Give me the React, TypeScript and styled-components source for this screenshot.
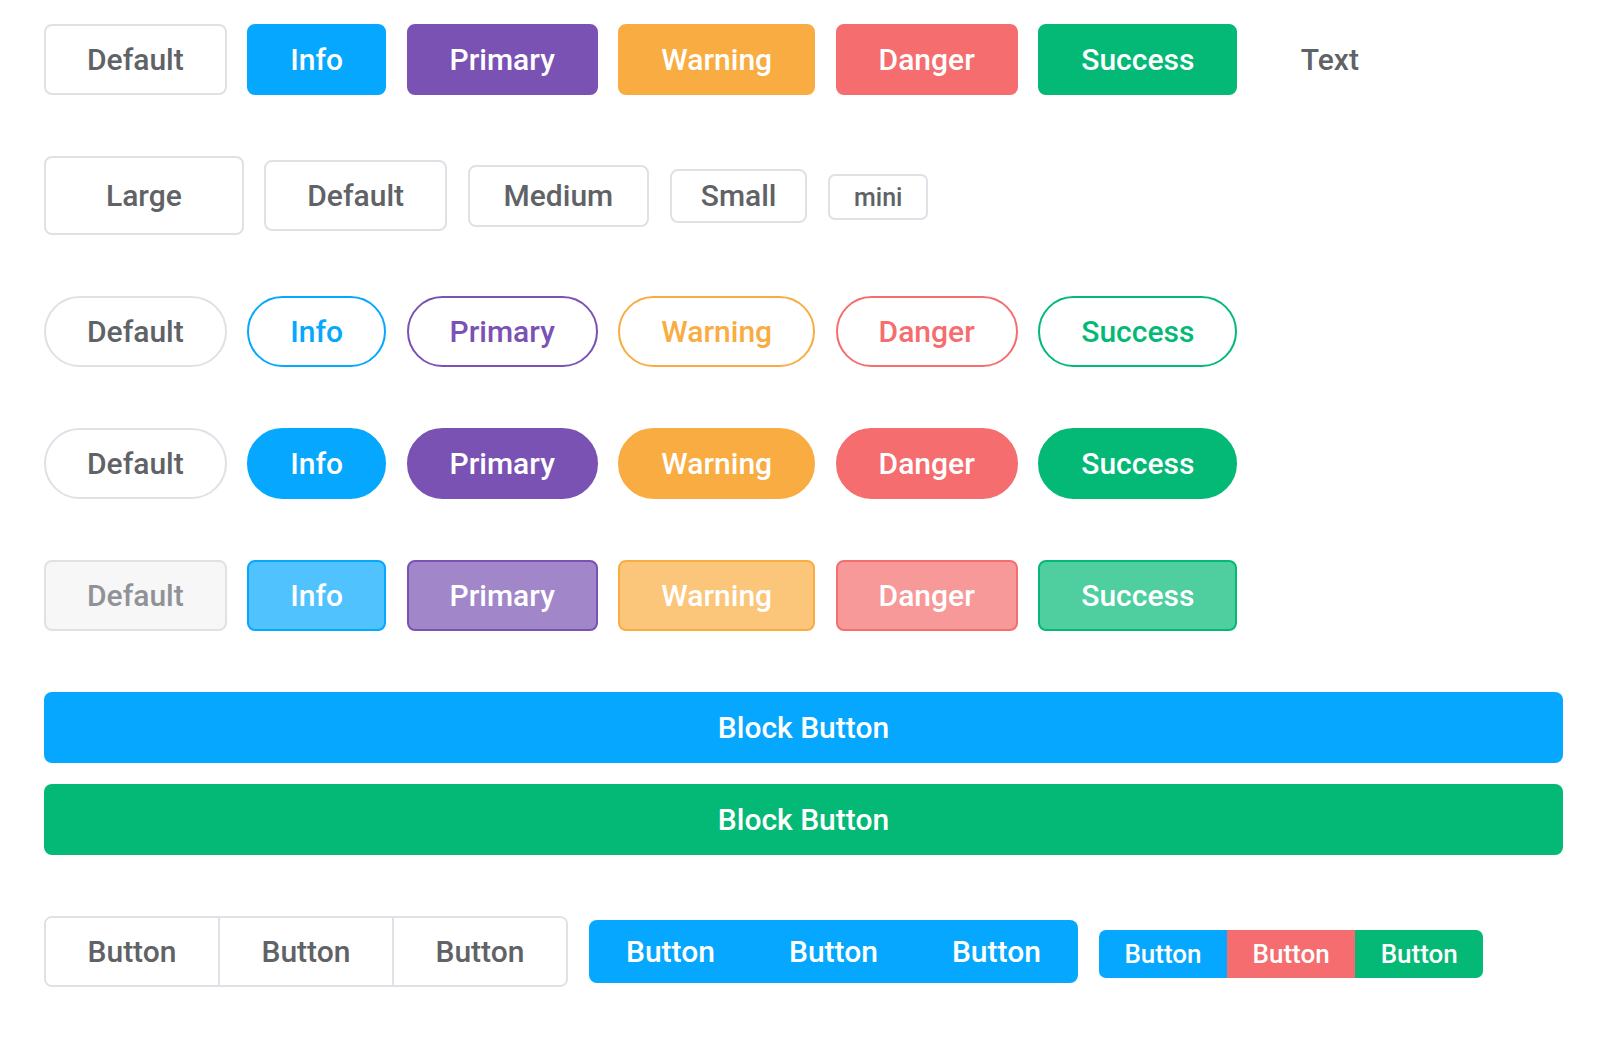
import React from "react";
import styled, { createGlobalStyle, css } from "styled-components";

const GlobalStyle = createGlobalStyle`
  html, body { margin: 0; padding: 0; background: #ffffff; }
  body { font-family: Roboto, "Liberation Sans", Arial, sans-serif; }
  * { box-sizing: border-box; }
`;

type Tone = "default" | "info" | "primary" | "warning" | "danger" | "success";
type Variant = "solid" | "outline" | "plain" | "text";
type Size = "large" | "default" | "medium" | "small" | "mini";

const COLORS: Record<Exclude<Tone, "default">, { c: string; rgb: string }> = {
  info: { c: "#05a8fe", rgb: "5,168,254" },
  primary: { c: "#7a52b4", rgb: "122,82,180" },
  warning: { c: "#f9ac41", rgb: "249,172,65" },
  danger: { c: "#f56d6e", rgb: "245,109,110" },
  success: { c: "#04b976", rgb: "4,185,118" },
};

const TEXT_GRAY = "#606266";
const BORDER_GRAY = "#dfe1e7";

const SIZES: Record<Size, { h: number; px: number; fs: number; r: number }> = {
  large: { h: 79, px: 60, fs: 30, r: 8 },
  default: { h: 71, px: 41, fs: 30, r: 8 },
  medium: { h: 62, px: 34, fs: 30, r: 8 },
  small: { h: 54, px: 29, fs: 30, r: 8 },
  mini: { h: 46, px: 24, fs: 25, r: 7 },
};

const toneStyles = (tone: Tone, variant: Variant) => {
  if (variant === "text") {
    return css`
      background: transparent;
      border-color: transparent;
      color: ${TEXT_GRAY};
    `;
  }
  if (tone === "default") {
    if (variant === "plain") {
      return css`
        background: #f7f7f8;
        border-color: ${BORDER_GRAY};
        color: #919297;
      `;
    }
    return css`
      background: #ffffff;
      border-color: ${BORDER_GRAY};
      color: ${TEXT_GRAY};
    `;
  }
  const { c, rgb } = COLORS[tone];
  if (variant === "outline") {
    return css`
      background: #ffffff;
      border-color: ${c};
      color: ${c};
    `;
  }
  if (variant === "plain") {
    return css`
      background: rgba(${rgb}, 0.7);
      border-color: ${c};
      color: #ffffff;
    `;
  }
  return css`
    background: ${c};
    border-color: ${c};
    color: #ffffff;
  `;
};

const Page = styled.main`
  display: flex;
  flex-direction: column;
  padding: 24px 39px 40px 44px;
`;

const Row = styled.div<{ $gap?: number; $space?: number }>`
  display: flex;
  align-items: baseline;
  gap: ${(p) => p.$gap ?? 20.5}px;
  margin-bottom: ${(p) => p.$space ?? 61}px;
`;

const Btn = styled.button<{
  $tone: Tone;
  $variant: Variant;
  $size: Size;
  $round?: boolean;
}>`
  display: inline-flex;
  align-items: center;
  justify-content: center;
  flex: none;
  height: ${(p) => SIZES[p.$size].h}px;
  padding: 0 ${(p) => SIZES[p.$size].px}px;
  font-family: inherit;
  font-size: ${(p) => SIZES[p.$size].fs}px;
  font-weight: 500;
  line-height: 1;
  border: 2px solid;
  border-radius: ${(p) => (p.$round ? "999px" : `${SIZES[p.$size].r}px`)};
  cursor: pointer;
  white-space: nowrap;
  ${(p) => toneStyles(p.$tone, p.$variant)}
`;

const BlockButton = styled.button<{ $tone: Exclude<Tone, "default"> }>`
  display: flex;
  align-items: center;
  justify-content: center;
  width: 100%;
  height: 71px;
  border: none;
  border-radius: 8px;
  background: ${(p) => COLORS[p.$tone].c};
  color: #ffffff;
  font-family: inherit;
  font-size: 30px;
  font-weight: 500;
  cursor: pointer;
`;

const BlockStack = styled.div`
  display: flex;
  flex-direction: column;
  gap: 21px;
  margin-bottom: 61px;
`;

const GroupRow = styled.div`
  display: flex;
  align-items: center;
  gap: 21px;
`;

const OutlineGroup = styled.div`
  display: flex;
  height: 71px;
  border: 2px solid ${BORDER_GRAY};
  border-radius: 8px;
  overflow: hidden;
`;

const OutlineGroupItem = styled.button`
  display: flex;
  align-items: center;
  padding: 0 41.5px;
  border: none;
  border-left: 2px solid ${BORDER_GRAY};
  background: #ffffff;
  color: ${TEXT_GRAY};
  font-family: inherit;
  font-size: 30px;
  font-weight: 500;
  cursor: pointer;
  &:first-child {
    border-left: none;
  }
`;

const SolidGroup = styled.div`
  display: flex;
  height: 63px;
  border-radius: 8px;
  overflow: hidden;
  background: ${COLORS.info.c};
`;

const SolidGroupItem = styled.button`
  display: flex;
  align-items: center;
  padding: 0 37px;
  border: none;
  background: transparent;
  color: #ffffff;
  font-family: inherit;
  font-size: 30px;
  font-weight: 500;
  cursor: pointer;
`;

const MixedGroup = styled.div`
  display: flex;
  height: 48px;
  margin-top: 5px;
  border-radius: 7px;
  overflow: hidden;
`;

const MixedGroupItem = styled.button<{ $tone: Exclude<Tone, "default"> }>`
  display: flex;
  align-items: center;
  padding: 0 25.5px;
  border: none;
  background: ${(p) => COLORS[p.$tone].c};
  color: #ffffff;
  font-family: inherit;
  font-size: 26px;
  font-weight: 500;
  cursor: pointer;
`;

const TONES: Tone[] = ["default", "info", "primary", "warning", "danger", "success"];
const LABELS: Record<Tone, string> = {
  default: "Default",
  info: "Info",
  primary: "Primary",
  warning: "Warning",
  danger: "Danger",
  success: "Success",
};

const sizeRow: { size: Size; label: string }[] = [
  { size: "large", label: "Large" },
  { size: "default", label: "Default" },
  { size: "medium", label: "Medium" },
  { size: "small", label: "Small" },
  { size: "mini", label: "mini" },
];

export default function App() {
  return (
    <>
      <GlobalStyle />
      <Page>
        <Row>
          {TONES.map((t) => (
            <Btn key={t} $tone={t} $variant={t === "default" ? "outline" : "solid"} $size="default">
              {LABELS[t]}
            </Btn>
          ))}
          <Btn $tone="default" $variant="text" $size="default">
            Text
          </Btn>
        </Row>

        <Row>
          {sizeRow.map((s) => (
            <Btn key={s.size} $tone="default" $variant="outline" $size={s.size}>
              {s.label}
            </Btn>
          ))}
        </Row>

        <Row>
          {TONES.map((t) => (
            <Btn key={t} $tone={t} $variant="outline" $size="default" $round>
              {LABELS[t]}
            </Btn>
          ))}
        </Row>

        <Row>
          {TONES.map((t) => (
            <Btn key={t} $tone={t} $variant={t === "default" ? "outline" : "solid"} $size="default" $round>
              {LABELS[t]}
            </Btn>
          ))}
        </Row>

        <Row>
          {TONES.map((t) => (
            <Btn key={t} $tone={t} $variant="plain" $size="default">
              {LABELS[t]}
            </Btn>
          ))}
        </Row>

        <BlockStack>
          <BlockButton $tone="info">Block Button</BlockButton>
          <BlockButton $tone="success">Block Button</BlockButton>
        </BlockStack>

        <GroupRow>
          <OutlineGroup>
            <OutlineGroupItem>Button</OutlineGroupItem>
            <OutlineGroupItem>Button</OutlineGroupItem>
            <OutlineGroupItem>Button</OutlineGroupItem>
          </OutlineGroup>
          <SolidGroup>
            <SolidGroupItem>Button</SolidGroupItem>
            <SolidGroupItem>Button</SolidGroupItem>
            <SolidGroupItem>Button</SolidGroupItem>
          </SolidGroup>
          <MixedGroup>
            <MixedGroupItem $tone="info">Button</MixedGroupItem>
            <MixedGroupItem $tone="danger">Button</MixedGroupItem>
            <MixedGroupItem $tone="success">Button</MixedGroupItem>
          </MixedGroup>
        </GroupRow>
      </Page>
    </>
  );
}
